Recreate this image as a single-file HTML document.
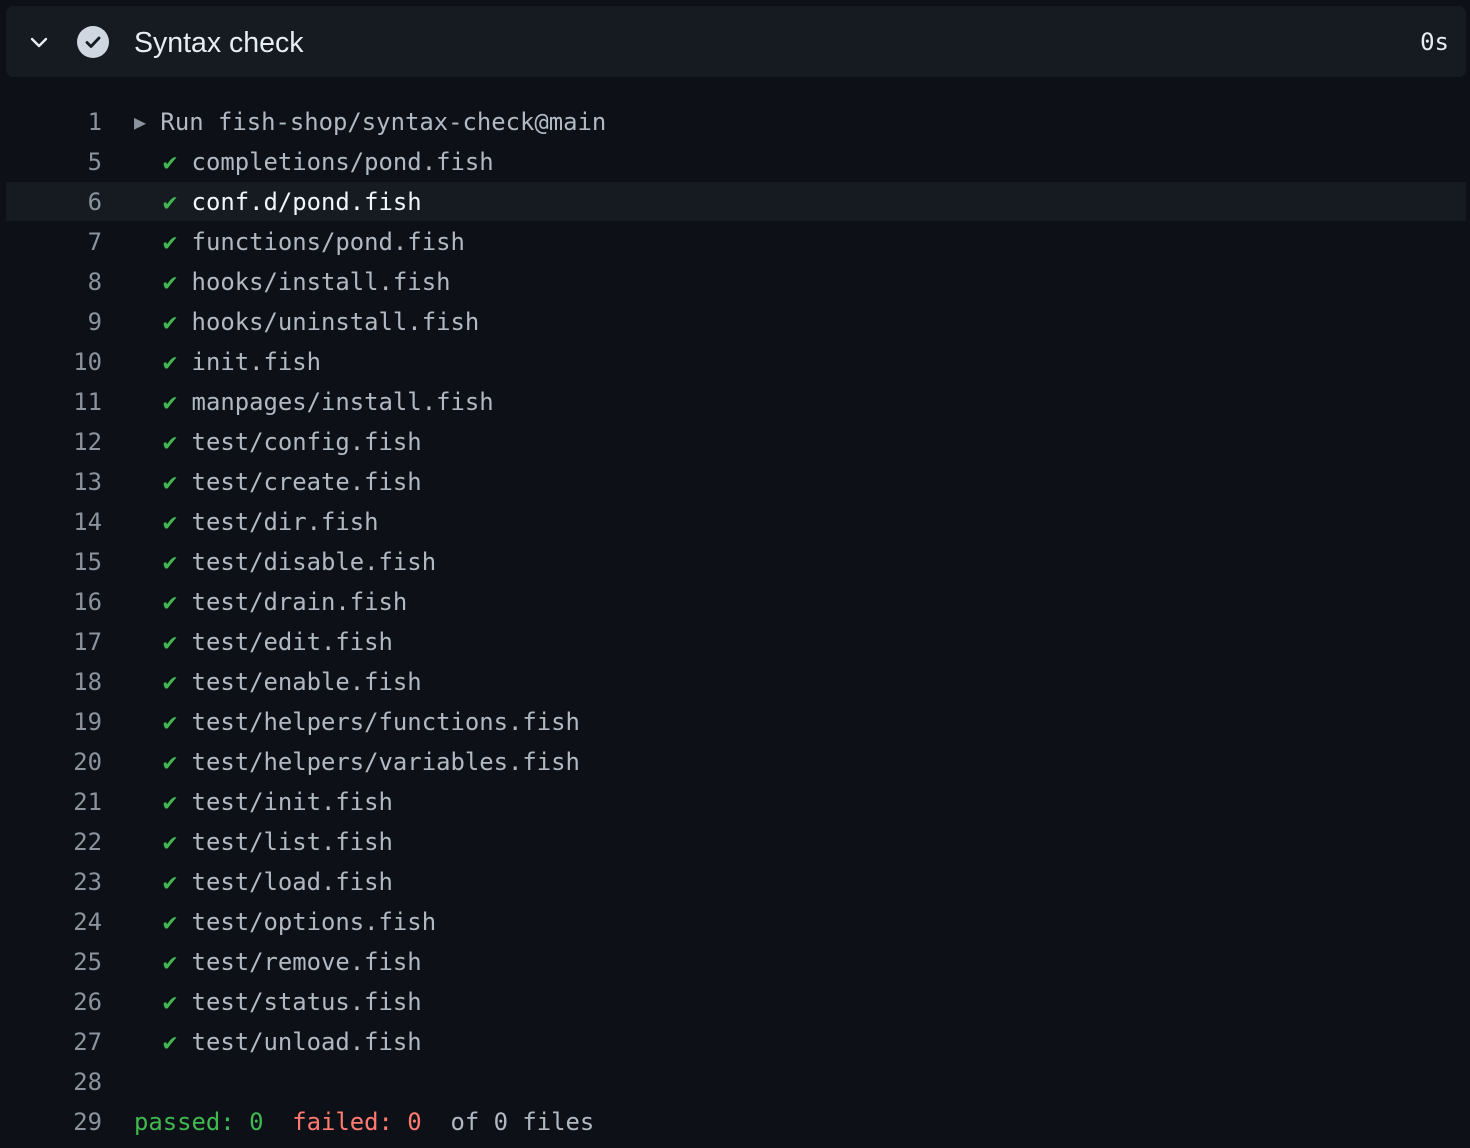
<!DOCTYPE html>
<html><head><style>
body{margin:0;background:#0d1117;width:1470px;height:1148px;overflow:hidden;font-family:"Liberation Sans",sans-serif}
.hdr{position:absolute;left:6px;top:6px;width:1460px;height:71px;background:#161b22;border-radius:8px}
.title{position:absolute;left:128px;top:21px;font-size:28.5px;color:#e6edf3}
.time{position:absolute;right:17px;top:22px;font:24px "DejaVu Sans Mono",monospace;color:#e6edf3}
.row{position:absolute;left:6px;width:1460px;height:40px;font:23.9px/40px "DejaVu Sans Mono","Liberation Mono",monospace;color:#b1bac4;white-space:pre}
.row.hl{background:#161b22;color:#f0f6fc}
.n,.c{top:1px}
.n{position:absolute;right:1364px;color:#8b949e;text-align:right}
.c{position:absolute;left:128px}
.g{color:#3fb950}.r{color:#ff7b72}
</style></head><body>
<div class="hdr">
<svg style="position:absolute;left:22px;top:25px" width="22" height="22" viewBox="0 0 22 22"><path d="M4 8l7 7 7-7" fill="none" stroke="#e6edf3" stroke-width="2.4" stroke-linecap="round" stroke-linejoin="round"/></svg>
<svg style="position:absolute;left:71px;top:20px" width="32" height="32" viewBox="0 0 32 32"><circle cx="16" cy="16" r="16" fill="#d1d7e0"/><path d="M10 16.5l4 4 8-8.5" fill="none" stroke="#161b22" stroke-width="2.8" stroke-linecap="round" stroke-linejoin="round"/></svg>
<div class="title">Syntax check</div>
<div class="time">0s</div>
</div>
<div class="row" style="top:101px"><span class="n">1</span><span class="c"><span style="font-size:20px;color:#8b949e;vertical-align:1px">▶</span> Run fish-shop/syntax-check@main</span></div>
<div class="row" style="top:141px"><span class="n">5</span><span class="c">  <span class="g">✔</span> completions/pond.fish</span></div>
<div class="row hl" style="top:182px;height:39px"><span class="n" style="top:0">6</span><span class="c" style="top:0">  <span class="g">✔</span> conf.d/pond.fish</span></div>
<div class="row" style="top:221px"><span class="n">7</span><span class="c">  <span class="g">✔</span> functions/pond.fish</span></div>
<div class="row" style="top:261px"><span class="n">8</span><span class="c">  <span class="g">✔</span> hooks/install.fish</span></div>
<div class="row" style="top:301px"><span class="n">9</span><span class="c">  <span class="g">✔</span> hooks/uninstall.fish</span></div>
<div class="row" style="top:341px"><span class="n">10</span><span class="c">  <span class="g">✔</span> init.fish</span></div>
<div class="row" style="top:381px"><span class="n">11</span><span class="c">  <span class="g">✔</span> manpages/install.fish</span></div>
<div class="row" style="top:421px"><span class="n">12</span><span class="c">  <span class="g">✔</span> test/config.fish</span></div>
<div class="row" style="top:461px"><span class="n">13</span><span class="c">  <span class="g">✔</span> test/create.fish</span></div>
<div class="row" style="top:501px"><span class="n">14</span><span class="c">  <span class="g">✔</span> test/dir.fish</span></div>
<div class="row" style="top:541px"><span class="n">15</span><span class="c">  <span class="g">✔</span> test/disable.fish</span></div>
<div class="row" style="top:581px"><span class="n">16</span><span class="c">  <span class="g">✔</span> test/drain.fish</span></div>
<div class="row" style="top:621px"><span class="n">17</span><span class="c">  <span class="g">✔</span> test/edit.fish</span></div>
<div class="row" style="top:661px"><span class="n">18</span><span class="c">  <span class="g">✔</span> test/enable.fish</span></div>
<div class="row" style="top:701px"><span class="n">19</span><span class="c">  <span class="g">✔</span> test/helpers/functions.fish</span></div>
<div class="row" style="top:741px"><span class="n">20</span><span class="c">  <span class="g">✔</span> test/helpers/variables.fish</span></div>
<div class="row" style="top:781px"><span class="n">21</span><span class="c">  <span class="g">✔</span> test/init.fish</span></div>
<div class="row" style="top:821px"><span class="n">22</span><span class="c">  <span class="g">✔</span> test/list.fish</span></div>
<div class="row" style="top:861px"><span class="n">23</span><span class="c">  <span class="g">✔</span> test/load.fish</span></div>
<div class="row" style="top:901px"><span class="n">24</span><span class="c">  <span class="g">✔</span> test/options.fish</span></div>
<div class="row" style="top:941px"><span class="n">25</span><span class="c">  <span class="g">✔</span> test/remove.fish</span></div>
<div class="row" style="top:981px"><span class="n">26</span><span class="c">  <span class="g">✔</span> test/status.fish</span></div>
<div class="row" style="top:1021px"><span class="n">27</span><span class="c">  <span class="g">✔</span> test/unload.fish</span></div>
<div class="row" style="top:1061px"><span class="n">28</span></div>
<div class="row" style="top:1101px"><span class="n">29</span><span class="c"><span class="g">passed: 0</span>  <span class="r">failed: 0</span>  of 0 files</span></div>
</body></html>
